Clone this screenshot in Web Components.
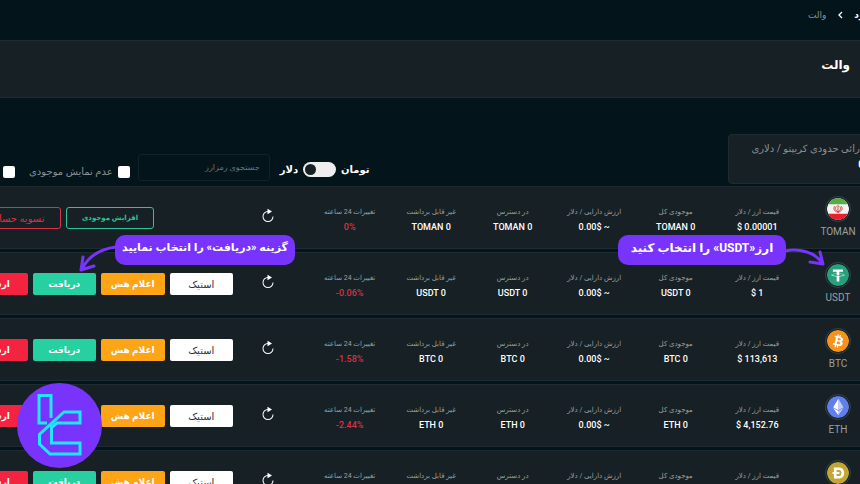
<!DOCTYPE html>
<html lang="fa" dir="rtl">
<head>
<meta charset="utf-8">
<title>والت</title>
<style>
  body {
    margin: 0;
    background: #03151b;
    color: #fff;
    font-family: Roboto, "DejaVu Sans", sans-serif;
    --panel: #172024;
    --line: #1f2b30;
    --muted: #899195;
    --violet: #7834fc;
  }
</style>
</head>
<body>
<wallet-page></wallet-page>

<script>
"use strict";

const ICONS = {
  TOMAN: `<clipPath id="c"><circle cx="16" cy="16" r="16"/></clipPath>
    <g clip-path="url(#c)"><path fill="#f4f4f4" d="M0 0h32v32H0z"/><path fill="#55ad45" d="M0 0h32v9H0z"/><path fill="#e8202b" d="M0 23h32v9H0z"/></g>
    <path fill="none" stroke="#dc3a40" stroke-width="1.4" d="M16 10v11M13.500 12c-2 3-1.500 6 2.500 8 4-2 4.500-5 2.500-8M11 12c-2 4-1 7 5 9 6-2 7-5 5-9"/>`,
  USDT: `<circle cx="16" cy="16" r="16" fill="#26a17b"/>
    <path fill="#fff" d="M17.922 17.383v-.002c-.11.008-.677.042-1.942.042-1.010 0-1.721-.03-1.971-.042v.003c-3.888-.171-6.790-.848-6.790-1.658 0-.809 2.902-1.486 6.790-1.660v2.644c.254.018.982.061 1.988.061 1.207 0 1.812-.05 1.925-.06v-2.643c3.880.173 6.775.850 6.775 1.658 0 .810-2.895 1.485-6.775 1.657m0-3.590v-2.366h5.414V7.819H8.595v3.608h5.414v2.365c-4.400.202-7.709 1.074-7.709 2.118 0 1.044 3.309 1.915 7.709 2.118v7.582h3.913v-7.584c4.393-.202 7.694-1.073 7.694-2.116 0-1.043-3.301-1.914-7.694-2.117"/>`,
  BTC: `<circle cx="16" cy="16" r="16" fill="#f7931a"/>
    <path fill="#fff" d="M23.189 14.020c.314-2.096-1.283-3.223-3.465-3.975l.708-2.840-1.728-.430-.690 2.765c-.454-.114-.920-.220-1.385-.326l.695-2.783L15.596 6l-.708 2.839c-.376-.086-.746-.170-1.104-.260l.002-.009-2.384-.595-.460 1.846s1.283.294 1.256.312c.700.175.826.638.805 1.006l-.806 3.235c.048.012.110.030.180.057l-.183-.045-1.130 4.532c-.086.212-.303.531-.793.410.018.025-1.256-.313-1.256-.313l-.858 1.978 2.250.561c.418.105.828.215 1.231.318l-.715 2.872 1.727.430.708-2.840c.472.127.930.245 1.378.357l-.706 2.828 1.728.430.715-2.866c2.948.558 5.164.333 6.097-2.333.752-2.146-.037-3.385-1.588-4.192 1.130-.260 1.980-1.003 2.207-2.538zm-3.950 5.538c-.533 2.147-4.148.986-5.320.695l.950-3.805c1.172.293 4.929.872 4.370 3.110zm.535-5.569c-.487 1.953-3.495.960-4.470.717l.860-3.450c.975.243 4.118.696 3.610 2.733z"/>`,
  ETH: `<circle cx="16" cy="16" r="16" fill="#627eea"/>
    <g fill="#fff"><path opacity=".6" d="M16.500 4v8.870l7.497 3.350zM16.500 21.968v6.027L24 17.616zM16.500 20.573l7.497-4.353-7.497-3.348z"/><path d="M16.500 4L9 16.220l7.500-3.350zM16.500 27.995v-6.028L9 17.616zM9 16.220l7.500 4.353v-7.701z"/></g>`,
  DOGE: `<circle cx="16" cy="16" r="16" fill="#c3a634"/>
    <path fill="#fff" fill-rule="evenodd" d="M10 8h7c5 0 8 3 8 8s-3 8-8 8h-7v-6.500H8v-3h2zm4 3.500v3h4v3h-4v3h3c2.500 0 4-1.500 4-4.500s-1.500-4.500-4-4.500z"/>`
};

class WalletPage extends HTMLElement {
  constructor() {
    super();
    this.attachShadow({ mode: "open" }).innerHTML = `
      <style>
      :host { display: block; position: relative; height: 100vh; overflow: hidden; }
      wallet-toolbar { margin-bottom: 2px; }
      .rows { display: grid; gap: 3px; }
      </style>
      <wallet-header></wallet-header>
      <wallet-toolbar></wallet-toolbar>
      <main class="rows">
        <coin-row symbol="TOMAN" price="0.00001" change="0%"></coin-row>
        <coin-row symbol="USDT" price="1" change="-0.06%"></coin-row>
        <coin-row symbol="BTC" price="113,613" change="-1.58%"></coin-row>
        <coin-row symbol="ETH" price="4,152.76" change="-2.44%"></coin-row>
        <coin-row symbol="DOGE" price="0.22" change="-3.1%"></coin-row>
      </main>
      <hint-bubble class="coin">ارز«USDT» را انتخاب کنید</hint-bubble>
      <hint-bubble class="receive">گزینه «دریافت» را انتخاب نمایید</hint-bubble>
      <brand-badge></brand-badge>`;
  }
}

class WalletHeader extends HTMLElement {
  constructor() {
    super();
    this.attachShadow({ mode: "open" }).innerHTML = `
      <style>
      :host { display: block; }
      nav {
        display: flex;
        align-items: center;
        gap: 11px;
        height: 30px;
        padding-bottom: 10px;
        margin-right: -30px;
        font-size: 9px;
      }
      a { color: #fff; font-weight: bold; text-decoration: none; }
      nav span { color: var(--muted); }
      svg { width: 6px; height: 8px; }
      .title {
        padding: 12px 10px 20px;
        background: var(--panel);
        border-block: 1px solid var(--line);
      }
      h1 { margin: 0; font-size: 12px; line-height: 24px; }
      </style>
      <nav>
        <a href="#">داشبورد</a>
        <svg viewBox="0 0 6 8" fill="none" stroke="#fff" stroke-width="1.300"><path d="M5 1L2 4l3 3"/></svg>
        <span>والت</span>
      </nav>
      <div class="title"><h1>والت</h1></div>`;
  }
}

class WalletToolbar extends HTMLElement {
  constructor() {
    super();
    this.attachShadow({ mode: "open" }).innerHTML = `
      <style>
      *, *::before { box-sizing: border-box; }
      :host {
        display: flex;
        justify-content: space-between;
        align-items: flex-start;
        padding-top: 36px;
      }
      .card {
        height: 50px;
        margin-right: -8px;
        padding: 6px 0 6px 22px;
        background: var(--panel);
        border: 1px solid var(--line);
        border-radius: 4px;
        white-space: nowrap;
        font-size: 10px;
        line-height: 16px;
        color: var(--muted);
      }
      .card b { display: block; padding-right: 3px; font-size: 10px; color: #fff; }
      .filters { display: flex; align-items: center; margin-top: 20px; padding-left: 3px; }
      label { white-space: nowrap; }
      .switch { display: flex; align-items: center; gap: 5px; font-size: 10px; font-weight: bold; }
      .switch label { padding-top: 4px; }
      .switch input {
        appearance: none;
        width: 33px;
        height: 15px;
        margin: 4px 0 0;
        padding: 2px;
        border-radius: 8px;
        background: #eee;
        direction: ltr;
      }
      .switch input::before {
        content: "";
        display: block;
        width: 11px;
        height: 11px;
        border-radius: 50%;
        background: var(--panel);
      }
      [type=search] {
        width: 132px;
        height: 27px;
        margin: 0 10px 0 8px;
        padding: 0 9px;
        border: 1px solid #12242a;
        border-radius: 3px;
        background: none;
        font: 8px Roboto, "DejaVu Sans", sans-serif;
        color: #fff;
      }
      ::placeholder { color: #6c767a; opacity: 1; }
      .tick {
        appearance: none;
        width: 12px;
        height: 12px;
        margin: 0;
        border-radius: 2px;
        background: #fff;
      }
      .hide { display: flex; align-items: center; gap: 5px; margin-left: 14px; font-size: 10px; color: var(--muted); }
      .hide, .filters > .tick { margin-top: 8px; }
      </style>
      <section class="card">دارائی حدودی کریپتو / دلاری<b>0</b></section>
      <div class="filters">
        <div class="switch">
          <label for="unit">تومان</label><input type="checkbox" id="unit" role="switch"><label for="unit">دلار</label>
        </div>
        <input type="search" placeholder="جستجوی رمزارز" aria-label="جستجوی رمزارز">
        <label class="hide"><input type="checkbox" class="tick">عدم نمایش موجودی</label>
        <input type="checkbox" class="tick" aria-label="علاقه‌مندی">
      </div>`;
  }
}

class CoinRow extends HTMLElement {
  connectedCallback() {
    const symbol = this.getAttribute("symbol");
    const cells = [
      ["قیمت ارز / دلار", `$ ${this.getAttribute("price")}`],
      ["موجودی کل", `${symbol} 0`],
      ["ارزش دارایی / دلار", "0.00$ ~"],
      ["در دسترس", `${symbol} 0`],
      ["غیر قابل برداشت", `${symbol} 0`],
      ["تغییرات 24 ساعته", this.getAttribute("change"), "down"]
    ];
    const actions = symbol === "TOMAN"
      ? [["افزایش موجودی", "outline add"], ["تسویه حساب", "outline settle"]]
      : [["استیک", "stake"], ["اعلام هش", "hash"], ["دریافت", "receive"], ["ارسال", "send"]];

    this.attachShadow({ mode: "open" }).innerHTML = `
      <style>
      *, :host { box-sizing: border-box; }
      :host {
        display: flex;
        align-items: center;
        height: 63px;
        padding-bottom: 1px;
        margin: 0 -12px 0 -36px;
        background: var(--panel);
        border-block: 1px solid var(--line);
      }
      .coin { width: 74px; flex: none; display: grid; justify-items: center; gap: 3px; padding-left: 6px; font-size: 10px; line-height: 14px; color: #9aa1a4; }
      .coin svg { width: 26px; height: 26px; border: 1px solid #31444a; border-radius: 50%; padding: 1px; }
      dl { flex: 7; display: grid; grid-template-columns: repeat(6, 1fr); margin: 0; padding-top: 6px; text-align: center; white-space: nowrap; }
      dt { font-size: 7px; line-height: 15px; color: #99a1a4; }
      dd { margin: 0; font-size: 9px; line-height: 15px; font-weight: 500; direction: ltr; }
      .down dd { color: #dc3046; }
      .refresh { flex: 1; padding: 2px 6px 0 0; text-align: center; }
      .refresh button { padding: 0; border: 0; background: none; color: #fff; line-height: 0; }
      .refresh svg { width: 16px; height: 16px; }
      .actions { width: 269px; flex: none; display: flex; gap: 5px; padding-top: 2px; }
      .actions button {
        width: 64px;
        height: 22px;
        padding: 0;
        border: 0;
        border-radius: 2px;
        font: bold 9px Roboto, "DejaVu Sans", sans-serif;
        color: #fff;
        white-space: nowrap;
      }
      .actions .stake { background: #fff; color: #28323a; font-size: 10px; font-weight: normal; }
      .hash { background: #fda417; }
      .receive { background: #27d0a0; }
      .send { background: #f42340; }
      .actions .outline { width: 88px; background: none; border: 1px solid; border-radius: 3px; }
      .actions .add { margin-right: 79px; color: #2dc596; font-size: 7px; }
      .actions .settle { color: #dc3046; flex: none; font-size: 10px; font-weight: normal; }
      </style>
      <div class="coin">
        <svg viewBox="0 0 32 32">${ICONS[symbol]}</svg>
        <span>${symbol}</span>
      </div>
      <dl>${cells.map(([label, value, cls = ""]) => `<div class="${cls}"><dt>${label}</dt><dd>${value}</dd></div>`).join("")}</dl>
      <div class="refresh"><button aria-label="به‌روزرسانی">
        <svg viewBox="0 0 16 16" fill="currentColor"><path d="M8 3a5.500 5.500 0 1 0 5.500 5.500h-1A4.500 4.500 0 1 1 8 4z"/><path d="M7.500 .800v5.400L12 3.500z"/></svg>
      </button></div>
      <div class="actions">${actions.map(([text, cls]) => `<button class="${cls}">${text}</button>`).join("")}</div>`;
  }
}

class HintBubble extends HTMLElement {
  constructor() {
    super();
    this.attachShadow({ mode: "open" }).innerHTML = `
      <style>
      :host {
        position: absolute;
        top: 235px;
        box-sizing: border-box;
        height: 30px;
        border-radius: 10px;
        background: var(--violet);
        text-align: center;
        white-space: nowrap;
        font-size: 12px;
        font-weight: bold;
        line-height: 26px;
      }
      :host(.coin) { right: 74px; width: 168px; }
      :host(.receive) { left: 115px; width: 180px; font-size: 11px; }
      svg { position: absolute; display: none; fill: none; stroke: var(--violet); stroke-width: 3; stroke-linecap: round; stroke-linejoin: round; }
      :host(.coin) .to-coin { display: block; left: 167px; top: 10px; }
      :host(.receive) .to-button { display: block; right: 179px; top: 8px; }
      </style>
      <slot></slot>
      <svg class="to-coin" width="42" height="24"><path d="M0 6C14 3 30 7 37 18M35 7l3 12-13-2"/></svg>
      <svg class="to-button" width="38" height="32"><path d="M38 4C22 6 10 14 4 26M5 14L3 27l13-4"/></svg>`;
  }
}

class BrandBadge extends HTMLElement {
  constructor() {
    super();
    this.attachShadow({ mode: "open" }).innerHTML = `
      <style>
      :host { position: absolute; left: 17px; top: 383px; line-height: 0; }
      </style>
      <svg width="85" height="85" viewBox="0 0 85 85">
        <circle cx="42.500" cy="42.500" r="42.500" fill="#7834fc"/>
        <g fill="none" stroke="#1ee7ff" stroke-width="3">
          <path d="M30 40H22V12.500H34V35"/>
          <path d="M63 29H47L22.500 51.500V61L33 71h30V60H34.500V44.500L40 40h23z"/>
        </g>
      </svg>`;
  }
}

customElements.define("wallet-header", WalletHeader);
customElements.define("wallet-toolbar", WalletToolbar);
customElements.define("coin-row", CoinRow);
customElements.define("hint-bubble", HintBubble);
customElements.define("brand-badge", BrandBadge);
customElements.define("wallet-page", WalletPage);
</script>
</body>
</html>
